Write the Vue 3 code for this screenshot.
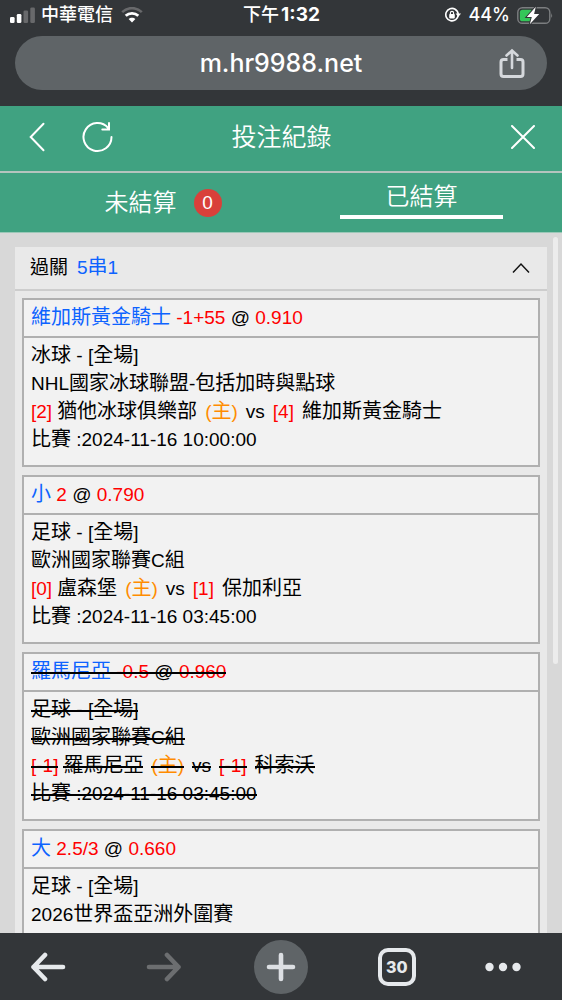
<script setup>
import { ref } from 'vue'

const open = ref(true)

const bets = [
  {
    pick: '維加斯黃金騎士', line: '-1+55', odds: '0.910',
    sport: '冰球 - [全場]', league: 'NHL國家冰球聯盟-包括加時與點球',
    home: { score: '[2]', name: '猶他冰球俱樂部' },
    away: { score: '[4]', name: '維加斯黃金騎士' },
    time: '比賽 :2024-11-16 10:00:00',
  },
  {
    pick: '小', line: '2', odds: '0.790',
    sport: '足球 - [全場]', league: '歐洲國家聯賽C組',
    home: { score: '[0]', name: '盧森堡' },
    away: { score: '[1]', name: '保加利亞' },
    time: '比賽 :2024-11-16 03:45:00',
  },
  {
    pick: '羅馬尼亞', line: '-0.5', odds: '0.960', cancelled: true,
    sport: '足球 - [全場]', league: '歐洲國家聯賽C組',
    home: { score: '[-1]', name: '羅馬尼亞' },
    away: { score: '[-1]', name: '科索沃' },
    time: '比賽 :2024-11-16 03:45:00',
  },
  {
    pick: '大', line: '2.5/3', odds: '0.660',
    sport: '足球 - [全場]', league: '2026世界盃亞洲外圍賽',
  },
]

// Splits a string into Han and Latin runs, which are set at different sizes.
const runs = (text) =>
  (text.match(/[\u4e00-\u9fff]+|[^\u4e00-\u9fff]+/g) || []).map((t) => ({
    t,
    han: /[\u4e00-\u9fff]/.test(t),
  }))
</script>

<template>
  <div class="screen">
    <header class="chrome-top">
      <div class="status">
        <div class="status-left">
          <svg width="26" height="16" viewBox="0 0 26 16" aria-hidden="true">
            <rect x="0" y="10" width="4.6" height="6" rx="1.3" fill="#fff" />
            <rect x="6.8" y="7" width="4.6" height="9" rx="1.3" fill="#fff" />
            <rect x="13.5" y="3.5" width="4.6" height="12.5" rx="1.3" fill="#68696b" />
            <rect x="20.3" y="0.5" width="4.6" height="15.5" rx="1.3" fill="#68696b" />
          </svg>
          <span class="carrier">中華電信</span>
          <svg width="22" height="16" viewBox="0 0 22 16" aria-hidden="true">
            <path d="M1.2 5.2 C6.6 -0.2 15.4 -0.2 20.8 5.2" fill="none" stroke="#68696b" stroke-width="2.6" />
            <path d="M4.7 8.8 C8.2 5.5 13.8 5.5 17.3 8.8" fill="none" stroke="#fff" stroke-width="2.8" />
            <path d="M7.6 12 C9.5 10.2 12.5 10.2 14.4 12 L11 15.6 Z" fill="#fff" />
          </svg>
        </div>
        <div class="clock">下午<b>1:32</b></div>
        <div class="status-right">
          <svg width="18" height="16" viewBox="0 0 18 16" aria-hidden="true">
            <path d="M14.2 8 A6.2 6.2 0 1 1 11.2 2.3" fill="none" stroke="#fff" stroke-width="1.6" />
            <path d="M11 2.2 A6.2 6.2 0 0 1 14.2 7" fill="none" stroke="#fff" stroke-width="1.6" />
            <path d="M11.6 6.6 H17 L14.3 10 Z" fill="#fff" />
            <rect x="5.2" y="7.1" width="5.6" height="4.3" rx="0.8" fill="#fff" />
            <path d="M6.4 7.4 V6 A1.6 1.6 0 0 1 9.6 6 V7.4" fill="none" stroke="#fff" stroke-width="1.1" />
          </svg>
          <span class="percent">44%</span>
          <svg width="37" height="19" viewBox="0 0 37 19" aria-hidden="true">
            <rect x="1.8" y="1.700" width="32" height="15.600" rx="4.600" fill="none" stroke="#7c7e80" stroke-width="1.4" />
            <path d="M35.200 7 Q37 9.500 35.200 12 Z" fill="#7c7e80" />
            <path d="M6.500 3.700 H15.500 V15.300 H6.500 Q3.900 15.300 3.900 12.700 V6.300 Q3.900 3.700 6.500 3.700 Z" fill="#34c759" />
            <path d="M19.800 0.800 L10.800 11 H15.800 L13.800 18.200 L23.200 7.900 H18.100 Z" fill="#fff" stroke="#333639" stroke-width="2" paint-order="stroke" />
          </svg>
        </div>
      </div>
      <div class="address">
        <button class="url" type="button">m.hr9988.net</button>
        <button class="share" type="button" aria-label="分享">
          <svg width="26" height="32" viewBox="0 -1 26 32" fill="none" stroke="#d5d8dc" stroke-width="3">
            <path d="M8.5 11.5 H4.5 Q2 11.5 2 14 V26 Q2 28.500 4.500 28.500 H21.500 Q24 28.500 24 26 V14 Q24 11.500 21.500 11.500 H17.500" />
            <path d="M13 20 V3 M7.500 7.500 L13 2.500 L18.500 7.500" stroke-width="2.6" stroke-linecap="round" />
          </svg>
        </button>
      </div>
    </header>

    <nav class="titlebar">
      <button class="icon-btn" type="button" aria-label="返回">
        <svg width="16" height="30" viewBox="0 0 16 30"><path d="M14.500 1.800 L1.700 15 L14.500 28.200" /></svg>
      </button>
      <button class="icon-btn reload" type="button" aria-label="重新整理">
        <svg width="32" height="32" viewBox="0 0 32 32">
          <path d="M29.500 16 A14 14 0 1 1 26.200 7 L27 8.500 M27 2 V8.500 H20.300" />
        </svg>
      </button>
      <h1>投注紀錄</h1>
      <button class="icon-btn close" type="button" aria-label="關閉">
        <svg width="24" height="24" viewBox="0 0 24 24"><path d="M1 1 L23 23 M23 1 L1 23" /></svg>
      </button>
    </nav>

    <div class="tabs" role="tablist">
      <button class="tab" type="button" role="tab" aria-selected="false">
        <span class="tab-label">未結算<span class="badge">0</span></span>
      </button>
      <button class="tab active" type="button" role="tab" aria-selected="true">
        <span class="tab-label">已結算</span>
      </button>
    </div>

    <main class="content">
      <span class="scroll-thumb"></span>
      <section class="panel">
        <button class="panel-head" type="button" :aria-expanded="open" @click="open = !open">
          <span>過關<span class="combo">5<span class="han">串</span>1</span></span>
          <svg :class="{ shut: !open }" width="18" height="12" viewBox="0 0 18 12" fill="none" stroke="#111" stroke-width="1.5">
            <path d="M1 10.500 L9 2 L17 10.500" />
          </svg>
        </button>
        <div v-if="open" class="bets">
          <article v-for="(bet, i) in bets" :key="i" class="bet" :class="{ cancelled: bet.cancelled }">
            <h2 class="bet-head">
              <span class="s"><span class="blue han">{{ bet.pick }}</span>{{ ' ' }}<span class="red">{{ bet.line }}</span> @ <span class="red">{{ bet.odds }}</span></span>
            </h2>
            <div class="bet-body">
              <p><span class="s"><span v-for="(r, k) in runs(bet.sport)" :key="k" :class="{ han: r.han }">{{ r.t }}</span></span></p>
              <p><span class="s"><span v-for="(r, k) in runs(bet.league)" :key="k" :class="{ han: r.han }">{{ r.t }}</span></span></p>
              <p v-if="bet.home">
                <span class="s red">{{ bet.home.score }}</span>
                <span class="s near"><span class="han">{{ bet.home.name }}</span></span>
                <span class="s orange apart">(<span class="han">主</span>)</span>
                <span class="s apart">vs</span>
                <span class="s red apart">{{ bet.away.score }}</span>
                <span class="s apart"><span class="han">{{ bet.away.name }}</span></span>
              </p>
              <p v-if="bet.time"><span class="s"><span v-for="(r, k) in runs(bet.time)" :key="k" :class="{ han: r.han }">{{ r.t }}</span></span></p>
            </div>
          </article>
        </div>
      </section>
    </main>

    <footer class="toolbar">
      <button type="button" aria-label="上一頁">
        <svg width="36" height="30" viewBox="0 0 36 30" fill="none" stroke="#e6e9ec" stroke-width="4.600" stroke-linecap="round" stroke-linejoin="round">
          <path d="M33 15 H3.500 M15 3 L3.500 15 L15 27" />
        </svg>
      </button>
      <button type="button" aria-label="下一頁" disabled>
        <svg width="36" height="30" viewBox="0 0 36 30" fill="none" stroke="#6c6e70" stroke-width="4.600" stroke-linecap="round" stroke-linejoin="round">
          <path d="M3 15 H32.500 M21 3 L32.500 15 L21 27" />
        </svg>
      </button>
      <button class="plus" type="button" aria-label="新分頁">
        <svg width="30" height="30" viewBox="0 0 30 30" fill="none" stroke="#dcdfe3" stroke-width="4.600" stroke-linecap="round">
          <path d="M15 3 V27 M3 15 H27" />
        </svg>
      </button>
      <button type="button" aria-label="分頁"><span class="count">30</span></button>
      <button class="more" type="button" aria-label="更多">
        <svg width="36" height="10" viewBox="0 0 36 10" fill="#e6e9ec">
          <circle cx="4.500" cy="5" r="4.200" /><circle cx="18" cy="5" r="4.200" /><circle cx="31.500" cy="5" r="4.200" />
        </svg>
      </button>
    </footer>
  </div>
</template>

<style>
body {
  margin: 0;
}
</style>

<style scoped>
.screen {
  display: flex;
  flex-direction: column;
  height: 100vh;
  overflow: hidden;
  background: #d8d8d8;
  color: #000;
  font-family: "Liberation Sans", "Noto Sans CJK TC", sans-serif;
  font-size: 19px;
}
.screen * {
  box-sizing: border-box;
}
button {
  border: 0;
  padding: 0;
  margin: 0;
  background: none;
  color: inherit;
  font: inherit;
}
svg {
  display: block;
}
h1,
h2,
p {
  margin: 0;
  font-weight: 400;
}

.chrome-top {
  flex: none;
  padding-bottom: 16px;
  background: #333639;
  color: #fff;
  font-family: Inter, "Noto Sans CJK TC", sans-serif;
  font-weight: 500;
}
.status {
  display: grid;
  grid-template-columns: 1fr auto 1fr;
  align-items: center;
  height: 36px;
  padding: 0 9px 6px 10px;
  font-size: 18px;
  line-height: 28px;
}
.status-left,
.status-right {
  display: flex;
  align-items: center;
}
.status-left {
  gap: 5px;
}
.status-left .carrier {
  margin-right: 3px;
}
.status-right {
  justify-content: flex-end;
  gap: 6px;
}
.clock b {
  margin-left: 2px;
  font-size: 19px;
  font-weight: 700;
}
.address {
  position: relative;
  display: flex;
  align-items: center;
  justify-content: center;
  height: 54px;
  margin: 0 15px;
  border-radius: 27px;
  background: #5f6467;
}
.url {
  font-size: 25px;
  line-height: 32px;
}
.share {
  position: absolute;
  right: 22px;
}

.titlebar {
  position: relative;
  flex: none;
  display: flex;
  align-items: center;
  height: 67px;
  padding: 0 27px 4px 29px;
  border-bottom: 2px solid #b4c4be;
  background: #40a281;
  color: #fff;
}
.titlebar svg {
  fill: none;
  stroke: #fff;
  stroke-width: 2;
  stroke-linecap: round;
}
.reload {
  margin-left: 37px;
}
.titlebar h1 {
  flex: 1;
  padding-right: 62px;
  text-align: center;
  font-size: 25px;
  line-height: 36px;
  font-weight: 350;
}
.tabs {
  flex: none;
  display: grid;
  grid-template-columns: 1fr 1fr;
  height: 60px;
  border-bottom: 1px solid #9cc8b8;
  background: #40a281;
  color: #fff;
  font-size: 24px;
  font-weight: 350;
}
.tab {
  display: flex;
  align-items: center;
  justify-content: center;
  line-height: 36px;
}
.tab-label {
  position: relative;
}
.badge {
  position: absolute;
  left: 100%;
  top: 4px;
  margin-left: 17px;
  width: 28px;
  height: 28px;
  border-radius: 50%;
  background: #d9403a;
  font-size: 19px;
  line-height: 28px;
  text-align: center;
}
.active {
  padding-top: 6px;
  align-items: flex-start;
}
.active .tab-label {
  width: 58%;
  border-bottom: 4px solid #fff;
}

.content {
  position: relative;
  flex: 1;
  min-height: 0;
  overflow: hidden;
  padding: 14px 15px 0;
}
.scroll-thumb {
  position: absolute;
  top: 4px;
  right: 4px;
  width: 5px;
  height: 61%;
  border-radius: 3px;
  background: #ececec;
}
.panel {
  background: #e9e9e9;
}
.panel-head {
  display: flex;
  align-items: center;
  justify-content: space-between;
  width: 100%;
  height: 44px;
  padding: 0 17px 0 15px;
  border-bottom: 2px solid #cdcdcd;
  line-height: 28px;
  text-align: left;
}
.combo {
  margin-left: 9px;
  color: #0d63ff;
}
.shut {
  transform: rotate(180deg);
}
.bets {
  display: flex;
  flex-direction: column;
  gap: 8px;
  padding: 7px 7px 8px;
}
.bet {
  border: 2px solid #b0b0b0;
  background: #f2f2f2;
  line-height: 28px;
}
.bet-head {
  padding: 4px 7px;
  border-bottom: 2px solid #b0b0b0;
  font-size: 19px;
}
.bet-body {
  padding: 4px 7px 11px;
}
.bet-body p,
.bet-head {
  white-space: nowrap;
}
.han {
  font-size: 20px;
  line-height: 20px;
}
.cancelled .s {
  position: relative;
}
.cancelled .s::after {
  content: "";
  position: absolute;
  left: 0;
  right: 0;
  top: 50%;
  border-top: 2px solid #000;
}
.near {
  margin-left: 5px;
}
.apart {
  margin-left: 8px;
}
.blue {
  color: #0d63ff;
}
.red {
  color: #f00;
}
.orange {
  color: #ff8c00;
}

.toolbar {
  flex: none;
  display: flex;
  align-items: center;
  justify-content: space-between;
  height: 67px;
  padding: 0 42px 0 21px;
  background: #333639;
}
.toolbar button {
  display: flex;
  align-items: center;
  justify-content: center;
  width: 54px;
  height: 54px;
}
.toolbar .plus {
  border-radius: 50%;
  background: #5f6467;
}
.toolbar .more {
  width: 34px;
}
.count {
  width: 38px;
  height: 38px;
  border: 4px solid #e6e9ec;
  border-radius: 10px;
  color: #e6e9ec;
  font: 800 16px/30px Inter, sans-serif;
  text-align: center;
}
.more svg {
  flex: none;
}
</style>
